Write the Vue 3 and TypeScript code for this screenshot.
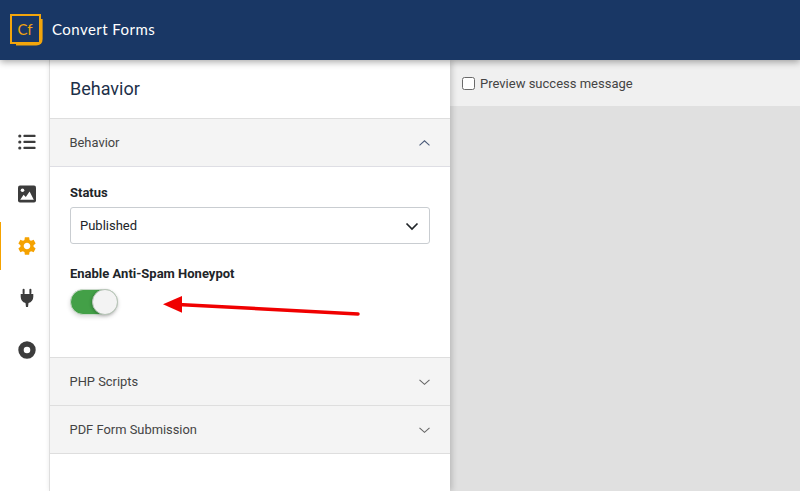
<script setup lang="ts">
const collapsed: string[] = ['PHP Scripts', 'PDF Form Submission']
</script>

<template>
  <div class="app">
    <header class="topbar">
      <div class="logo">
        <svg class="logo-frame" width="33" height="32" viewBox="0 0 33 32" fill="none" stroke="#f2a50c">
          <rect x="1" y="1" width="29" height="28" stroke-width="2" />
          <path d="M31.700 5v20c0 3.400-2 5.500-5.500 5.500H6" stroke-width="1.800" />
        </svg>
        <span>Cf</span>
      </div>
      <div class="brand">Convert Forms</div>
    </header>
    <div class="main">
      <nav class="rail">
        <div class="rail-item">
          <svg width="20" height="20" viewBox="0 0 20 20" fill="#3c3c3c">
            <circle cx="2.800" cy="4" r="1.600" /><circle cx="2.800" cy="10" r="1.600" /><circle cx="2.800" cy="16" r="1.600" />
            <rect x="6.500" y="2.800" width="12" height="2.300" rx=".6" /><rect x="6.500" y="8.800" width="12" height="2.300" rx=".6" /><rect x="6.500" y="14.800" width="12" height="2.300" rx=".6" />
          </svg>
        </div>
        <div class="rail-item">
          <svg width="20" height="20" viewBox="0 0 20 20">
            <rect x="1" y="1.500" width="18" height="17" rx="2" fill="#3c3c3c" />
            <circle cx="5.500" cy="6.200" r="1.800" fill="#fff" />
            <path d="M3.200 15.800 6.600 10.800 8.800 13 12.600 7.400 16.800 15.800Z" fill="#fff" />
          </svg>
        </div>
        <div class="rail-item active">
          <svg width="22" height="22" viewBox="0 0 24 24" fill="#f5a200">
            <path d="M19.140 12.940c.04-.3.06-.61.06-.94 0-.32-.02-.64-.07-.94l2.030-1.580c.18-.14.23-.41.12-.61l-1.920-3.320c-.12-.22-.37-.29-.59-.22l-2.390.96c-.5-.38-1.030-.7-1.620-.94l-.36-2.540c-.04-.24-.24-.41-.48-.41h-3.840c-.24 0-.43.17-.47.41l-.36 2.540c-.59.24-1.130.57-1.620.94l-2.390-.96c-.22-.08-.47 0-.59.22L2.740 8.870c-.12.21-.08.47.12.61l2.030 1.580c-.05.3-.09.63-.09.94s.02.64.07.94l-2.030 1.580c-.18.14-.23.41-.12.61l1.920 3.320c.12.22.37.29.59.22l2.390-.96c.5.38 1.030.7 1.620.94l.36 2.540c.05.24.24.41.48.41h3.840c.24 0 .44-.17.47-.41l.36-2.540c.59-.24 1.130-.56 1.620-.94l2.390.96c.22.08.47 0 .59-.22l1.920-3.320c.12-.22.07-.47-.12-.61l-2.010-1.580zM12 15.600c-1.980 0-3.600-1.620-3.600-3.600s1.620-3.600 3.600-3.600 3.600 1.620 3.600 3.600-1.620 3.600-3.600 3.600z" />
          </svg>
        </div>
        <div class="rail-item">
          <svg width="20" height="20" viewBox="0 0 20 20" fill="#3c3c3c">
            <rect x="5.600" y="0.800" width="2" height="5.500" rx="1" /><rect x="12.400" y="0.800" width="2" height="5.500" rx="1" />
            <path d="M3.700 6h12.600v2.800c0 3.300-1.900 5.500-4.800 6.300L11 19H9l-.5-3.900c-2.900-.8-4.800-3-4.800-6.300Z" />
          </svg>
        </div>
        <div class="rail-item">
          <svg width="20" height="20" viewBox="0 0 20 20">
            <circle cx="10" cy="10" r="6" fill="none" stroke="#3c3c3c" stroke-width="5.400" />
          </svg>
        </div>
      </nav>

      <section class="panel">
        <h1 class="panel-title">Behavior</h1>
        <div class="acc-head open">
          <span>Behavior</span>
          <svg width="11" height="12" viewBox="0 0 11 12" fill="none" stroke="#4a5a78" stroke-width="1.100"><path d="M.5 8.300 5.500 3.800l5 4.500" /></svg>
        </div>
        <div class="acc-body">
          <label class="field-label">Status</label>
          <div class="select">
            <span>Published</span>
            <svg width="14" height="14" viewBox="0 0 14 14" fill="none" stroke="#212529" stroke-width="1.700"><path d="M1.500 4.500 7 10l5.500-5.500" /></svg>
          </div>
          <label class="field-label second">Enable Anti-Spam Honeypot</label>
          <div class="toggle"><div class="knob"></div></div>
        </div>
        <div v-for="name in collapsed" :key="name" class="acc-head">
          <span>{{ name }}</span>
          <svg width="11" height="12" viewBox="0 0 11 12" fill="none" stroke="#666" stroke-width="1.100"><path d="M.5 3.800 5.500 8.300l5-4.500" /></svg>
        </div>
      </section>

      <section class="preview">
        <div class="preview-bar">
          <span class="checkbox"></span>
          <span>Preview success message</span>
        </div>
      </section>
    </div>

    <svg class="arrow" width="210" height="30" viewBox="0 0 210 30">
      <path d="M195 19 15 9.500" stroke="#f00000" stroke-width="3.500" stroke-linecap="round" fill="none" />
      <path d="M0 9.300 19 1 19 17.700Z" fill="#f00000" />
    </svg>
  </div>
</template>

<style scoped>
.app {
  position: relative;
  width: 800px;
  height: 491px;
  overflow: hidden;
  background: #fff;
  font-family: Roboto, "Liberation Sans", sans-serif;
  color: #212529;
}
.topbar {
  position: relative;
  z-index: 3;
  height: 60px;
  display: flex;
  align-items: center;
  gap: 10px;
  padding: 0 0 2px 10px;
  box-sizing: border-box;
  background: #193765;
  box-shadow: 0 2px 7px rgba(0, 0, 0, 0.35);
}
.logo {
  position: relative;
  width: 32px;
  height: 30px;
  display: flex;
  align-items: center;
  justify-content: center;
  padding-right: 2px;
  box-sizing: border-box;
  color: #f2a50c;
  font-family: Lato, sans-serif;
  font-weight: 400;
  font-size: 15px;
}
.logo-frame {
  position: absolute;
  left: 0;
  top: 0;
}
.brand {
  color: #fff;
  font-family: Lato, sans-serif;
  font-size: 15px;
  letter-spacing: 0.45px;
}
.main {
  display: flex;
  height: 431px;
}
.rail {
  width: 49px;
  flex: none;
  box-sizing: border-box;
  padding-top: 56px;
  display: flex;
  flex-direction: column;
}
.rail-item {
  position: relative;
  height: 52px;
  flex: none;
  display: flex;
  align-items: center;
  justify-content: center;
  padding-left: 5px;
  box-sizing: border-box;
}
.rail-item.active::before {
  content: "";
  position: absolute;
  left: 0;
  top: 2px;
  bottom: 2px;
  width: 1px;
  background: #f5a200;
}
.panel {
  width: 401px;
  flex: none;
  box-sizing: border-box;
  position: relative;
  z-index: 2;
  background: #fff;
  border-left: 1px solid #dedede;
  box-shadow: 2px 0 6px rgba(0, 0, 0, 0.18);
}
.panel-title {
  margin: 0;
  height: 58px;
  box-sizing: border-box;
  padding: 18px 20px 0;
  font-size: 18px;
  line-height: 22px;
  font-weight: 400;
  color: #1d3049;
}
.acc-head {
  height: 48px;
  box-sizing: border-box;
  display: flex;
  align-items: center;
  justify-content: space-between;
  padding: 0 20px 0 19.500px;
  background: #f4f4f4;
  border-top: 1px solid #dedede;
  font-size: 12.900px;
  color: #444;
}
.acc-head:last-child {
  height: 49px;
  border-bottom: 1px solid #dedede;
}
.acc-head.open {
  border-bottom: 1px solid #dedee4;
  height: 49px;
}
.acc-body {
  height: 190px;
  box-sizing: border-box;
  padding: 19px 20px 0;
}
.field-label {
  display: block;
  font-size: 13px;
  line-height: 14px;
  font-weight: 700;
  color: #212529;
}
.field-label.second {
  margin-top: 23px;
}
.select {
  margin-top: 7px;
  height: 37px;
  box-sizing: border-box;
  display: flex;
  align-items: center;
  justify-content: space-between;
  padding: 0 10px 0 9px;
  border: 1px solid #c9cdd1;
  border-radius: 3px;
  font-size: 13px;
  color: #212529;
}
.toggle {
  position: relative;
  margin-top: 8px;
  width: 48px;
  height: 26px;
  box-sizing: border-box;
  border-radius: 13px;
  background: #43a047;
  border: 1px solid #c8d8c8;
  box-shadow: 0 2px 4px rgba(0, 0, 0, 0.15);
}
.knob {
  position: absolute;
  top: -1px;
  right: -1px;
  width: 26px;
  height: 26px;
  box-sizing: border-box;
  border-radius: 50%;
  background: #f3f3f3;
  border: 1px solid #b8c4b8;
  box-shadow: -1px 1px 3px rgba(0, 0, 0, 0.2);
}
.preview {
  flex: 1;
  background: #e0e0e0;
}
.preview-bar {
  height: 46px;
  box-sizing: border-box;
  display: flex;
  align-items: center;
  gap: 5px;
  padding-left: 12px;
  background: #f0f0f0;
  font-size: 13px;
  color: #444;
}
.checkbox {
  width: 13px;
  height: 13px;
  box-sizing: border-box;
  border: 1px solid #6a6a6a;
  border-radius: 2.500px;
  background: #fff;
}
.arrow {
  position: absolute;
  left: 163px;
  top: 295px;
  z-index: 4;
}
</style>
